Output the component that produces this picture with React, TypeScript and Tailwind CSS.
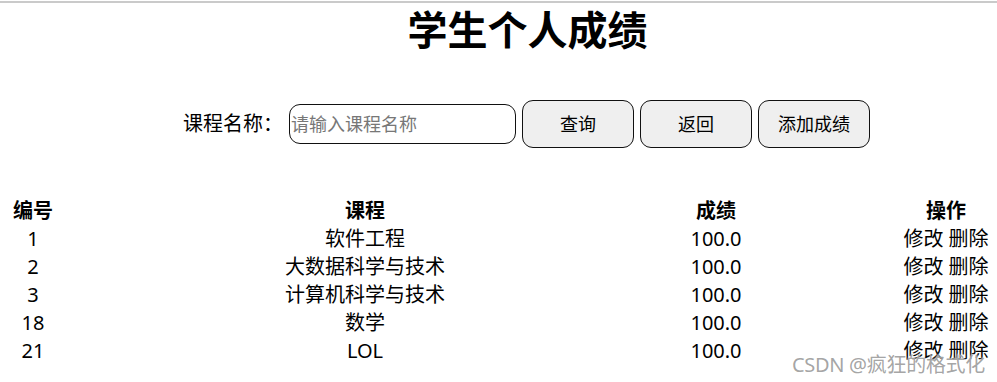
import React, { useState } from 'react';

type Score = {
  id: number;
  course: string;
  score: string;
};

const scores: Score[] = [
  { id: 1, course: '软件工程', score: '100.0' },
  { id: 2, course: '大数据科学与技术', score: '100.0' },
  { id: 3, course: '计算机科学与技术', score: '100.0' },
  { id: 18, course: '数学', score: '100.0' },
  { id: 21, course: 'LOL', score: '100.0' },
];

const font = { fontFamily: '"Noto Sans", "Noto Sans CJK SC", sans-serif' };

const ActionButton = (props: { text: string }) => {
  return (
    <button className="w-[112px] h-[48px] rounded-[11px] border border-[#111] bg-[#efefef] text-[18px] text-black">
      {props.text}
    </button>
  );
};

const App = () => {
  const [courseName, setCourseName] = useState<string>('');

  return (
    <div className="relative w-[997px] h-[382px] bg-white text-black overflow-hidden" style={font}>
      <div className="mt-[1px] h-[2px] bg-[#cacaca]" />
      <h1 className="ml-[58px] mt-[7px] text-center text-[40px] leading-[40px] font-bold">学生个人成绩</h1>

      <div className="ml-[56px] mt-[50px] flex flex-row justify-center items-center">
        <span className="text-[20px] leading-[28px]">课程名称：</span>
        <input
          className="ml-[6px] w-[227px] h-[40px] rounded-[11px] border border-[#111] px-[1px] text-[18px] placeholder:text-[#777] outline-none"
          type="text"
          placeholder="请输入课程名称"
          value={courseName}
          onChange={(e) => setCourseName(e.target.value)}
        />
        <div className="ml-[6px] flex flex-row gap-[6px]">
          <ActionButton text="查询" />
          <ActionButton text="返回" />
          <ActionButton text="添加成绩" />
        </div>
      </div>

      <div className="mt-[48px] text-[20px]">
        <div className="grid grid-cols-[66px_598px_104px_1fr] h-[28px] items-center font-bold">
          <div className="text-center">编号</div>
          <div className="text-center">课程</div>
          <div className="text-center">成绩</div>
          <div className="flex justify-end pr-[8px]">
            <span className="w-[86px] text-center">操作</span>
          </div>
        </div>
        {scores.map((s) => (
          <div key={s.id} className="grid grid-cols-[66px_598px_104px_1fr] h-[28px] items-center">
            <div className="text-center">{s.id}</div>
            <div className="text-center">{s.course}</div>
            <div className="text-center">{s.score}</div>
            <div className="flex justify-end pr-[8px]">
              <span className="w-[86px] text-center whitespace-nowrap">修改 删除</span>
            </div>
          </div>
        ))}
      </div>

      <div className="absolute right-[12px] bottom-[5px] text-[20px] leading-[24px] tracking-[-0.3px] text-[#9a9a9a]/90 [text-shadow:0_0_2px_#fff]">
        CSDN @疯狂的格式化
      </div>
    </div>
  );
};

export default App;
